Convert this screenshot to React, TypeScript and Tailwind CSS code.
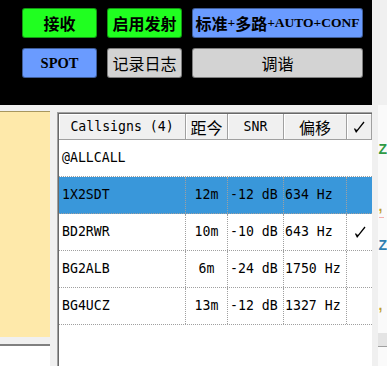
import React from "react";

const CJK = /[\u2E80-\u9FFF\uFF00-\uFFEF]/;

function Mixed({ text, cjk, latin }: { text: string; cjk: string; latin: string }) {
  const runs: { c: boolean; s: string }[] = [];
  for (const ch of text) {
    const c = CJK.test(ch);
    const last = runs[runs.length - 1];
    if (last && last.c === c) last.s += ch;
    else runs.push({ c, s: ch });
  }
  return (
    <>
      {runs.map((r, i) => (
        <span key={i} className={r.c ? cjk : latin}>
          {r.s}
        </span>
      ))}
    </>
  );
}

const CJK_B = "font-['Noto_Sans_CJK_SC',sans-serif] text-[16px] font-bold";
const CJK_R = "font-['Noto_Sans_CJK_SC',sans-serif] text-[16px] font-normal";
const LAT_B = "font-['Liberation_Serif',serif] text-[13.5px] font-bold";
const LAT_R = "font-['DejaVu_Sans_Mono',monospace] text-[13.2px] font-normal";

function Btn({ text, bg, bold, big }: { text: string; bg: string; bold?: boolean; big?: boolean }) {
  return (
    <div
      className={`flex items-center justify-center h-[30px] rounded-[3px] border border-black/40 leading-none text-black whitespace-nowrap ${bg}`}
    >
      {big ? (
        <span className="font-['Liberation_Serif',serif] text-[14.5px] font-bold">{text}</span>
      ) : (
        <Mixed text={text} cjk={bold ? CJK_B : CJK_R} latin={bold ? LAT_B : LAT_R} />
      )}
    </div>
  );
}

function Check() {
  return (
    <svg width="12" height="12" viewBox="0 0 12 12">
      <path d="M1.5 7.5 L3.2 10.8 L11 1" stroke="black" strokeWidth="1.3" fill="none" />
      <path d="M1.8 8.6 L3.3 11 L4.6 8.8 Z" fill="black" />
    </svg>
  );
}

const widths = ["w-[127px]", "w-[42px]", "w-[56px]", "w-[63px]", "w-[25px]"];

const rows = [
  { c: "1X2SDT", d: "12m", s: "-12 dB", o: "634 Hz", k: false, sel: true },
  { c: "BD2RWR", d: "10m", s: "-10 dB", o: "643 Hz", k: true, sel: false },
  { c: "BG2ALB", d: "6m", s: "-24 dB", o: "1750 Hz", k: false, sel: false },
  { c: "BG4UCZ", d: "13m", s: "-12 dB", o: "1327 Hz", k: false, sel: false },
];

export default function App() {
  return (
    <div className="w-[387px] h-[366px] overflow-hidden flex bg-[#f0f0f0] text-black">
      {/* main */}
      <div className="w-[372px] flex flex-col">
        <div className="h-[105px] bg-black pl-[22px] pt-[8px]">
          <div className="grid grid-cols-[75px_75px_171px] gap-x-[10px] gap-y-[10px]">
            <Btn text="接收" bg="bg-[#20ff20]" bold />
            <Btn text="启用发射" bg="bg-[#20ff20]" bold />
            <Btn text="标准+多路+AUTO+CONF" bg="bg-[#6a9bff]" bold />
            <Btn text="SPOT" bg="bg-[#6a9bff]" bold big />
            <Btn text="记录日志" bg="bg-[#d3d3d3]" />
            <Btn text="调谐" bg="bg-[#d3d3d3]" />
          </div>
        </div>
        <div className="flex-1 flex">
          {/* left panel */}
          <div className="w-[50px] flex flex-col pt-[6px]">
            <div className="h-[226px] bg-[#fee9aa] border-t border-[#a8975e]" />
            <div className="h-[7px]" />
            <div className="h-[2px] bg-[#808080]" />
            <div className="flex-1 bg-white" />
          </div>
          <div className="w-[7px]" />
          {/* table */}
          <div className="flex-1 mt-[7px] border-l border-t border-[#a0a0a0] flex">
            <div className="flex-1 border-l border-t border-[#696969] bg-white flex flex-col">
              <div className="flex h-[26px] bg-[#f0f0f0] leading-none">
                {["Callsigns (4)", "距今", "SNR", "偏移"].map((t, i) => (
                  <div
                    key={i}
                    className={`${widths[i]} flex items-center justify-center border-r border-b border-[#a0a0a0] shadow-[inset_1px_1px_0_#ffffff] whitespace-nowrap`}
                  >
                    <Mixed text={t} cjk={CJK_R} latin={LAT_R} />
                  </div>
                ))}
                <div className="w-[25px] flex items-center justify-center border-r border-b border-[#a0a0a0] shadow-[inset_1px_1px_0_#ffffff]">
                  <Check />
                </div>
              </div>
              <div className="flex h-[37px] items-center border-b border-dotted border-[#a0a0a0] pl-[3px]">
                <span className={LAT_R}>@ALLCALL</span>
              </div>
              {rows.map((r, i) => (
                <div
                  key={i}
                  className={`flex h-[37px] border-b border-dotted border-[#a0a0a0] whitespace-nowrap ${r.sel ? "bg-[#3997da]" : ""}`}
                >
                  <div className={`${widths[0]} flex items-center pl-[3px] border-r border-dotted border-[#a0a0a0] ${LAT_R}`}>{r.c}</div>
                  <div className={`${widths[1]} flex items-center justify-center border-r border-dotted border-[#a0a0a0] ${LAT_R}`}>{r.d}</div>
                  <div className={`${widths[2]} flex items-center pl-[2px] border-r border-dotted border-[#a0a0a0] ${LAT_R}`}>{r.s}</div>
                  <div className={`${widths[3]} flex items-center pl-[1px] border-r border-dotted border-[#a0a0a0] ${LAT_R}`}>{r.o}</div>
                  <div className={`${widths[4]} flex items-center justify-center`}>{r.k ? <Check /> : null}</div>
                </div>
              ))}
              <div className="flex-1" />
            </div>
          </div>
        </div>
      </div>
      {/* right strip */}
      <div className="w-[15px] flex">
        <div className="w-[7px] bg-[#f0f0f0]" />
        <div className="w-[1px] bg-[#a0a0a0]" />
        <div className="flex-1 flex flex-col">
          <div className="h-[105px] bg-[#f0f0f0]" />
          <div className="flex-1 bg-[#fafafa] flex flex-col overflow-hidden font-['Liberation_Sans',sans-serif] font-bold text-[14px] leading-none">
            <div className="h-[37px]" />
            <div className="h-[12px] text-[#2f9a44]">Z</div>
            <div className="h-[45px]" />
            <div className="h-[10px] text-[#c0a030]">,</div>
            <div className="h-[8px]" />
            <div className="h-[1px] ml-[1px] w-[5px] bg-[#f4b0b0]" />
            <div className="h-[20px]" />
            <div className="h-[14px] text-[#2f7fb0]">Z</div>
            <div className="h-[46px]" />
            <div className="h-[10px] text-[#c0a030]">,</div>
            <div className="h-[25px]" />
            <div className="h-[14px] bg-[#e4e4e4] border-b border-[#a0a0a0]" />
            <div className="flex-1" />
          </div>
        </div>
      </div>
    </div>
  );
}
